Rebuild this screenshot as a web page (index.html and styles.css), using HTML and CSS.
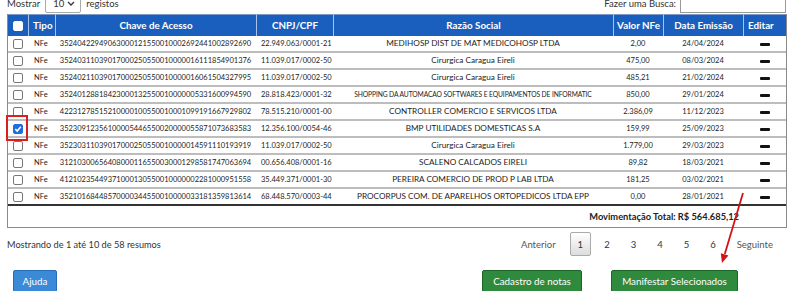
FILE: index.html
```html
<!DOCTYPE html>
<html lang="pt-BR">
<head>
<meta charset="utf-8">
<title>Resumos NFe</title>
<link rel="stylesheet" href="styles.css">
</head>
<body>
<div class="page">
  <div class="topbar">
    <div class="len">Mostrar <span class="select">10<svg class="chev" width="8" height="5" viewBox="0 0 8 5"><polyline points="1,1 4,4 7,1" fill="none" stroke="#333" stroke-width="1.3"/></svg></span> registos</div>
    <div class="search">Fazer uma Busca: <span class="input"></span></div>
  </div>

  <table class="grid">
    <colgroup>
      <col class="c-chk"><col class="c-tipo"><col class="c-chave"><col class="c-cnpj"><col class="c-razao"><col class="c-valor"><col class="c-data"><col class="c-edit">
    </colgroup>
    <thead>
      <tr>
        <th class="chk"><span class="box hbox"></span></th>
        <th class="left">Tipo</th>
        <th>Chave de Acesso</th>
        <th>CNPJ/CPF</th>
        <th>Razão Social</th>
        <th>Valor NFe</th>
        <th>Data Emissão</th>
        <th class="left">Editar</th>
      </tr>
    </thead>
    <tbody>
      <tr><td class="chk"><span class="box"></span></td><td class="tipo">NFe</td><td>35240422949063000121550010002692441002892690</td><td class="cnpj">22.949.063/0001-21</td><td class="razao">MEDIHOSP DIST DE MAT MEDICOHOSP LTDA</td><td>2,00</td><td>24/04/2024</td><td><span class="dash"></span></td></tr>
      <tr><td class="chk"><span class="box"></span></td><td class="tipo">NFe</td><td>35240311039017000250550010000016111854901376</td><td class="cnpj">11.039.017/0002-50</td><td class="razao">Cirurgica Caragua Eireli</td><td>475,00</td><td>08/03/2024</td><td><span class="dash"></span></td></tr>
      <tr><td class="chk"><span class="box"></span></td><td class="tipo">NFe</td><td>35240211039017000250550010000016061504327995</td><td class="cnpj">11.039.017/0002-50</td><td class="razao">Cirurgica Caragua Eireli</td><td>485,21</td><td>21/02/2024</td><td><span class="dash"></span></td></tr>
      <tr><td class="chk"><span class="box"></span></td><td class="tipo">NFe</td><td>35240128818423000132550010000005331600994590</td><td class="cnpj">28.818.423/0001-32</td><td class="razao wide">SHOPPING DA AUTOMACAO SOFTWARES E EQUIPAMENTOS DE INFORMATIC</td><td>850,00</td><td>29/01/2024</td><td><span class="dash"></span></td></tr>
      <tr><td class="chk"><span class="box"></span></td><td class="tipo">NFe</td><td>42231278515210000100550010001099191667929802</td><td class="cnpj">78.515.210/0001-00</td><td class="razao">CONTROLLER COMERCIO E SERVICOS LTDA</td><td>2.386,09</td><td>11/12/2023</td><td><span class="dash"></span></td></tr>
      <tr><td class="chk"><span class="box checked"><svg width="8" height="8" viewBox="0 0 8 8"><polyline points="1.3,4.2 3.2,6 6.8,1.8" fill="none" stroke="#fff" stroke-width="1.6"/></svg></span><span class="highlight"></span></td><td class="tipo">NFe</td><td>35230912356100005446550020000055871073683583</td><td class="cnpj">12.356.100/0054-46</td><td class="razao">BMP UTILIDADES DOMESTICAS S.A</td><td>159,99</td><td>25/09/2023</td><td><span class="dash"></span></td></tr>
      <tr><td class="chk"><span class="box"></span></td><td class="tipo">NFe</td><td>35230311039017000250550010000014591110193919</td><td class="cnpj">11.039.017/0002-50</td><td class="razao">Cirurgica Caragua Eireli</td><td>1.779,00</td><td>29/03/2023</td><td><span class="dash"></span></td></tr>
      <tr><td class="chk"><span class="box"></span></td><td class="tipo">NFe</td><td>31210300656408000116550030001298581747063694</td><td class="cnpj">00.656.408/0001-16</td><td class="razao">SCALENO CALCADOS EIRELI</td><td>89,82</td><td>18/03/2021</td><td><span class="dash"></span></td></tr>
      <tr><td class="chk"><span class="box"></span></td><td class="tipo">NFe</td><td>41210235449371000130550010000002281000951558</td><td class="cnpj">35.449.371/0001-30</td><td class="razao">PEREIRA COMERCIO DE PROD P LAB LTDA</td><td>181,25</td><td>03/02/2021</td><td><span class="dash"></span></td></tr>
      <tr class="last"><td class="chk"><span class="box"></span></td><td class="tipo">NFe</td><td>35210168448570000344550010000033181359813614</td><td class="cnpj">68.448.570/0003-44</td><td class="razao">PROCORPUS COM. DE APARELHOS ORTOPEDICOS LTDA EPP</td><td>0,00</td><td>28/01/2021</td><td><span class="dash"></span></td></tr>
    </tbody>
    <tfoot>
      <tr><td colspan="8" class="total">Movimentação Total: R$ 564.685,12</td></tr>
    </tfoot>
  </table>

  <div class="infobar">
    <div class="info">Mostrando de 1 até 10 de 58 resumos</div>
    <div class="pager">
      <span class="pg nav">Anterior</span>
      <span class="pg current">1</span>
      <span class="pg">2</span>
      <span class="pg">3</span>
      <span class="pg">4</span>
      <span class="pg">5</span>
      <span class="pg">6</span>
      <span class="pg nav">Seguinte</span>
    </div>
  </div>

  <div class="actions">
    <button class="btn blue">Ajuda</button>
    <div class="right-actions">
      <button class="btn green cad">Cadastro de notas</button>
      <button class="btn green man">Manifestar Selecionados</button>
    </div>
  </div>
</div>

<svg class="arrow" width="790" height="291" viewBox="0 0 790 291">
  <line x1="743" y1="193" x2="724.8" y2="254" stroke="#d41414" stroke-width="1.8"/>
  <polygon points="722,263 720.8,253.2 728.4,255.5" fill="#d41414"/>
</svg>
</body>
</html>
```

FILE: styles.css
```css
* { box-sizing: border-box; }
html, body { margin: 0; padding: 0; }
body {
  font-family: Lato, "Open Sans", Arial, sans-serif;
  color: #333;
  background: #fff;
  width: 790px;
  height: 291px;
  overflow: hidden;
  position: relative;
}
.page { padding: 0 5px 0 7px; }

/* top controls */
.topbar {
  display: flex;
  justify-content: space-between;
  align-items: center;
  height: 20px;
  margin-top: -7px;
  margin-bottom: 1px;
  font-size: 9.5px;
}
.len, .search { display: flex; align-items: center; }
.select {
  display: inline-flex;
  align-items: center;
  justify-content: space-between;
  width: 36px;
  height: 20px;
  margin: 0 5px 0 5px;
  padding: 0 5px 0 7px;
  border: 1px solid #aaa;
  border-radius: 2px;
  background: #fff;
  font-size: 9.5px;
}
.search .input {
  display: inline-block;
  width: 106px;
  height: 20px;
  margin-left: 4px;
  border: 1px solid #999;
  background: #fff;
  margin-right: -1px;
}

/* table */
.grid {
  width: 778px;
  table-layout: fixed;
  border-collapse: separate;
  border-spacing: 0;
  border-left: 1px solid #8a8a8a;
  border-right: 1px solid #8a8a8a;
  border-bottom: 1px solid #8a8a8a;
}
.c-chk { width: 20px; }
.c-tipo { width: 27px; }
.c-chave { width: 201px; }
.c-cnpj { width: 77px; }
.c-razao { width: 280px; }
.c-valor { width: 50px; }
.c-data { width: 80px; }
.c-edit { width: 43px; }

.grid th {
  background: #1a5fbd;
  color: #fff;
  font-weight: 700;
  font-size: 9.8px;
  height: 22px;
  line-height: 21px;
  padding: 0;
  text-align: center;
  white-space: nowrap;
  border-left: 1px solid #a9c4e8;
  border-top: 1px solid #7d9bc4;
}
.grid th:first-child { border-left: none; }
.grid th.left { text-align: left; padding-left: 4px; }

.grid td {
  font-size: 7.5px;
  color: #1c1c1c;
  padding: 0;
  height: 16.8px;
  line-height: 15px;
  text-align: center;
  white-space: nowrap;
  border-bottom: 2px solid #bdbdbd;
}
.grid td.tipo { text-align: left; padding-left: 6px; }
.grid td.cnpj { text-align: left; padding-left: 5px; }
.grid td.razao { font-size: 8.2px; }
.grid td.razao.wide { overflow: visible; font-size: 6.7px; letter-spacing: -0.1px; }
.grid tr.last td { border-bottom: 2px solid #333; }

.chk { position: relative; }
.box {
  display: inline-flex;
  align-items: center;
  justify-content: center;
  width: 10px;
  height: 10px;
  border: 1px solid #777;
  border-radius: 2px;
  background: #fff;
  vertical-align: middle;
}
.hbox { border-color: #fff; }
.box.checked { background: #1b6fe0; border-color: #1b6fe0; }
.highlight {
  position: absolute;
  left: -2px;
  top: -6px;
  width: 22px;
  height: 26px;
  border: 2px solid #d92020;
}

.dash {
  display: inline-block;
  width: 10px;
  height: 3px;
  background: #111;
  border-radius: 1px;
  vertical-align: middle;
}

.grid td.total {
  height: 21px;
  line-height: 20px;
  border-bottom: none;
  text-align: right;
  padding-right: 47px;
  font-size: 9.3px;
  font-weight: 700;
  color: #222;
}

/* info + pagination */
.infobar {
  display: flex;
  justify-content: space-between;
  align-items: center;
  height: 24px;
  margin-top: 4px;
  font-size: 9.5px;
  color: #333;
}
.info { font-size: 9.2px; }
.pager {
  display: flex;
  align-items: center;
  gap: 5px;
  margin-right: 4px;
}
.pg {
  display: inline-flex;
  align-items: center;
  justify-content: center;
  height: 24px;
  padding: 0 7px;
  min-width: 21px;
  color: #333;
  border: 1px solid transparent;
  border-radius: 2px;
}
.pg.nav { color: #555; }
.pg.nav:first-child { margin-right: 1px; }
.pg.current {
  border-color: #aaa;
  background: linear-gradient(#fff, #dcdcdc);
}

/* buttons */
.actions {
  display: flex;
  align-items: center;
  margin-top: 14px;
  padding-left: 6px;
}
.right-actions {
  margin-left: auto;
  margin-right: 47px;
  display: flex;
  gap: 29px;
}
.btn {
  height: 22px;
  font-family: Lato, "Open Sans", Arial, sans-serif;
  font-size: 9.8px;
  color: #fff;
  border-radius: 2px;
  padding: 0;
  cursor: pointer;
}
.btn.blue {
  width: 44px;
  background: #3a8ad8;
  border: 1px solid #2a6db6;
}
.btn.green {
  background: #2f8a3d;
  border: 1px solid #1c6628;
}
.btn.cad { width: 100px; }
.btn.man { width: 127px; }

.arrow {
  position: absolute;
  left: 0;
  top: 0;
  pointer-events: none;
}
```
